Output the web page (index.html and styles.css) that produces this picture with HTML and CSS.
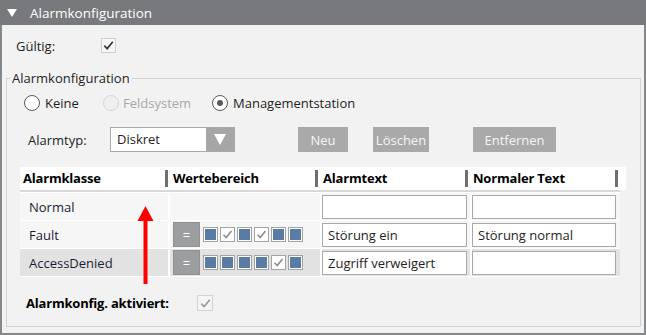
FILE: index.html
```html
<!DOCTYPE html>
<html lang="de">
<head>
<meta charset="utf-8">
<title>Alarmkonfiguration</title>
<link rel="stylesheet" href="styles.css">
</head>
<body>
<div class="panel">
  <div class="header"><span class="tri"></span><span class="htitle">Alarmkonfiguration</span></div>
  <div class="valid-row">
    <span class="valid-label">Gültig:</span>
    <span class="cb"><svg width="15" height="15" viewBox="0 0 15 15"><path d="M3.3 7.6 L6.2 10.6 L11.8 3.8" fill="none" stroke="#3a3a3a" stroke-width="1.7"/></svg></span>
  </div>
  <fieldset class="fs">
    <legend class="legend">Alarmkonfiguration</legend>
    <div class="radios">
      <label class="ritem r1"><span class="radio"></span><span>Keine</span></label>
      <label class="ritem r2 disabled"><span class="radio"></span><span>Feldsystem</span></label>
      <label class="ritem r3"><span class="radio on"><span class="dot"></span></span><span>Managementstation</span></label>
    </div>
    <div class="typ-row">
      <span class="typ-label">Alarmtyp:</span>
      <div class="combo"><span class="combo-text">Diskret</span><span class="combo-btn"><span class="ctri"></span></span></div>
      <span class="btn b-neu">Neu</span>
      <span class="btn b-los">Löschen</span>
      <span class="btn b-ent">Entfernen</span>
    </div>
    <div class="table">
      <div class="thead">
        <div class="th">Alarmklasse</div>
        <div class="th">Wertebereich</div>
        <div class="th">Alarmtext</div>
        <div class="th">Normaler Text</div>
      </div>
      <div class="tline"></div>
      <div class="tbody">
        <div class="tr">
          <div class="td name">Normal</div>
          <div class="td range"></div>
          <div class="td"><span class="tb"></span></div>
          <div class="td"><span class="tb"></span></div>
        </div>
        <div class="tr">
          <div class="td name">Fault</div>
          <div class="td range">
            <span class="eq">=</span>
            <span class="bits">
              <span class="bit f"></span>
              <span class="bit c"><svg width="13" height="13" viewBox="0 0 13 13"><path d="M2.5 6.8 L5.2 9.6 L10.5 3" fill="none" stroke="#8c8c8c" stroke-width="1.6"/></svg></span>
              <span class="bit f"></span>
              <span class="bit c"><svg width="13" height="13" viewBox="0 0 13 13"><path d="M2.5 6.8 L5.2 9.6 L10.5 3" fill="none" stroke="#8c8c8c" stroke-width="1.6"/></svg></span>
              <span class="bit f"></span>
              <span class="bit f"></span>
            </span>
          </div>
          <div class="td"><span class="tb">Störung ein</span></div>
          <div class="td"><span class="tb">Störung normal</span></div>
        </div>
        <div class="tr sel">
          <div class="td name">AccessDenied</div>
          <div class="td range">
            <span class="eq">=</span>
            <span class="bits">
              <span class="bit f"></span>
              <span class="bit f"></span>
              <span class="bit f"></span>
              <span class="bit f"></span>
              <span class="bit c"><svg width="13" height="13" viewBox="0 0 13 13"><path d="M2.5 6.8 L5.2 9.6 L10.5 3" fill="none" stroke="#8c8c8c" stroke-width="1.6"/></svg></span>
              <span class="bit f"></span>
            </span>
          </div>
          <div class="td"><span class="tb">Zugriff verweigert</span></div>
          <div class="td"><span class="tb"></span></div>
        </div>
      </div>
    </div>
    <div class="act-row">
      <span class="act-label">Alarmkonfig. aktiviert:</span>
      <span class="cb dis"><svg width="15" height="15" viewBox="0 0 15 15"><path d="M3.3 7.6 L6.2 10.6 L11.8 3.8" fill="none" stroke="#9a9a9a" stroke-width="1.6"/></svg></span>
    </div>
  </fieldset>
  <svg class="arrow" width="20" height="82" viewBox="0 0 20 82">
    <polygon points="9.5,2 1.5,17 17.5,17" fill="#ff0000"/>
    <rect x="7.5" y="16" width="4" height="64" fill="#ff0000"/>
  </svg>
</div>
</body>
</html>
```

FILE: styles.css
```css
* { box-sizing: border-box; }
html, body { margin: 0; padding: 0; }
body {
  font-family: "Open Sans", "Noto Sans", sans-serif;
  font-size: 13px;
  color: #1e1e1e;
  background: #f2f2f2;
}
.panel {
  position: relative;
  width: 646px;
  height: 335px;
  background: #f2f2f2;
  border: 2px solid #85888b;
  border-top: 0;
  display: flex;
  flex-direction: column;
}
.header {
  height: 25px;
  background: #77797c;
  color: #ffffff;
  display: flex;
  align-items: center;
  margin: 0 -2px;
  padding-left: 7px;
  font-size: 13.5px;
}
.tri {
  width: 0;
  height: 0;
  border-left: 5px solid transparent;
  border-right: 5px solid transparent;
  border-top: 8px solid #ffffff;
  margin-right: 13px;
}
.valid-row {
  display: flex;
  align-items: center;
  margin-top: 13px;
  height: 15px;
  padding-left: 14px;
}
.valid-label { width: 85px; }
.cb {
  width: 15px;
  height: 15px;
  border: 1px solid #cfcfcf;
  background: #f7f7f7;
  display: flex;
  align-items: center;
  justify-content: center;
}
.cb svg { display: block; margin: -1px; }
.cb.dis { width: 16px; height: 16px; border-color: #d4d4d4; background: #f4f4f4; }
.fs {
  margin: 17px 3px 0 4px;
  padding: 0 0 5px 0;
  border: 1px solid #d3d3d3;
  min-width: 0;
  flex: 1;
  margin-bottom: 6px;
}
.legend {
  padding: 0 2px;
  margin-left: 3px;
  line-height: 17px;
}
.radios {
  display: flex;
  align-items: center;
  height: 16px;
  margin-top: 8px;
  padding-left: 17px;
}
.ritem { display: flex; align-items: center; gap: 5px; }
.r1 { width: 79px; }
.r2 { width: 109px; gap: 4px; }
.radio {
  width: 16px;
  height: 16px;
  border-radius: 50%;
  border: 1px solid #5a5a5a;
  background: #ffffff;
  display: flex;
  align-items: center;
  justify-content: center;
}
.disabled { color: #a8a8a8; }
.disabled .radio { border-color: #d6d6d6; background: #f0f0f0; }
.dot { width: 6px; height: 6px; border-radius: 50%; background: #5a5a5a; }
.typ-row {
  display: flex;
  align-items: center;
  height: 25px;
  margin-top: 16px;
  padding-left: 21px;
}
.typ-label { width: 82px; }
.combo {
  width: 125px;
  height: 25px;
  border: 1px solid #a9a9a9;
  background: #ffffff;
  display: flex;
}
.combo-text { flex: 1; padding-left: 6px; line-height: 23px; }
.combo-btn {
  width: 28px;
  background: #a6a6a6;
  display: flex;
  align-items: center;
  justify-content: center;
}
.ctri {
  width: 0; height: 0;
  border-left: 6px solid transparent;
  border-right: 6px solid transparent;
  border-top: 11px solid #ffffff;
}
.btn {
  height: 25px;
  background: #a9a9a9;
  color: #f5f5f5;
  display: flex;
  align-items: center;
  justify-content: center;
}
.b-neu { width: 50px; margin-left: 63px; }
.b-los { width: 56px; margin-left: 25px; }
.b-ent { width: 83px; margin-left: 44px; }
.table {
  margin: 15px 0 0 13px;
  width: 606px;
}
.thead {
  display: grid;
  grid-template-columns: 150px 150px 150px 150px 6px;
  height: 23px;
  background: #ffffff;
}
.th {
  position: relative;
  font-weight: 700;
  color: #000;
  padding-left: 3px;
  line-height: 23px;
  letter-spacing: -0.2px;
}
.th::after {
  content: "";
  position: absolute;
  right: 2px;
  top: 3px;
  width: 3px;
  height: 17px;
  background: #6f6f6f;
}
.tline { height: 3px; width: 600px; background: #ffffff; border-top: 2px solid #d9d9d9; }
.tbody {
  width: 600px;
  background: #ffffff;
  display: flex;
  flex-direction: column;
  gap: 1px;
  padding-bottom: 1px;
}
.tr {
  display: grid;
  grid-template-columns: 148px 150px 148px 148px;
  column-gap: 2px;
  height: 27px;
}
.td {
  background: #f6f6f6;
  display: flex;
  align-items: center;
}
.tr.sel .td { background: #e2e2e2; }
.td.name { padding-left: 9px; color: #1c1c34; }
.td.range { padding-left: 3px; }
.eq {
  width: 27px;
  height: 25px;
  background: #9c9ea0;
  border: 1px solid #8e9092;
  color: #ffffff;
  display: flex;
  align-items: center;
  justify-content: center;
  font-size: 13px;
}
.bits { display: flex; gap: 2px; margin-left: 3px; }
.bit {
  width: 15px;
  height: 15px;
  border: 1px solid #a3a3a3;
  background: #ffffff;
  display: flex;
  align-items: center;
  justify-content: center;
}
.bit.f { box-shadow: inset 0 0 0 1px #ffffff; background: #5b7ba7; }
.bit svg { display: block; }
.tb {
  width: 145px;
  height: 24px;
  border: 1px solid #a9a9a9;
  background: #ffffff;
  padding-left: 5px;
  line-height: 22px;
}
.td:last-child .tb { width: 144px; }
.act-row {
  display: flex;
  align-items: center;
  height: 16px;
  margin-top: 18px;
  padding-left: 19px;
}
.act-label { width: 171px; font-weight: 700; color: #000; letter-spacing: -0.2px; }
.arrow {
  position: absolute;
  left: 134px;
  top: 204px;
}
```
